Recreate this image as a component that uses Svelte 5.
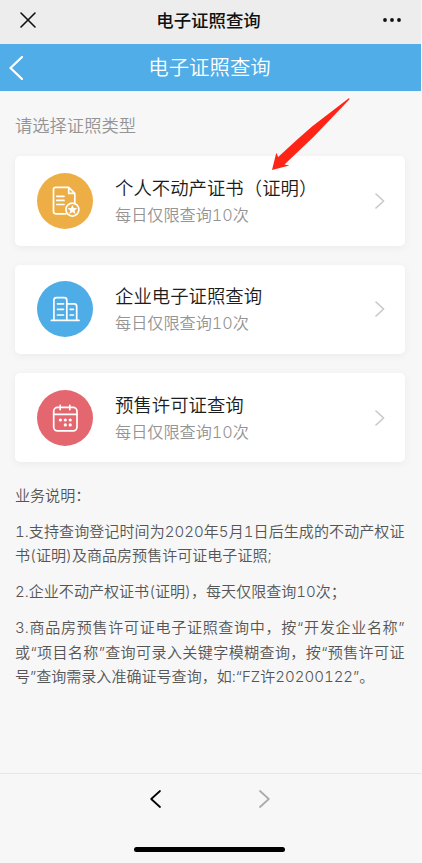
<script lang="ts">
  interface Card {
    icon: 'document' | 'building' | 'calendar';
    title: string;
    hint: string;
  }

  interface Line {
    text: string;
    full?: boolean;
  }

  const cards: Card[] = [
    { icon: 'document', title: '个人不动产证书（证明）', hint: '每日仅限查询10次' },
    { icon: 'building', title: '企业电子证照查询', hint: '每日仅限查询10次' },
    { icon: 'calendar', title: '预售许可证查询', hint: '每日仅限查询10次' },
  ];

  const notes: Line[][] = [
    [{ text: '业务说明：' }],
    [
      { text: '1.支持查询登记时间为2020年5月1日后生成的不动产权证', full: true },
      { text: '书(证明)及商品房预售许可证电子证照;' },
    ],
    [{ text: '2.企业不动产权证书(证明)，每天仅限查询10次；' }],
    [
      { text: '3.商品房预售许可证电子证照查询中，按“开发企业名称”', full: true },
      { text: '或“项目名称”查询可录入关键字模糊查询，按“预售许可证', full: true },
      { text: '号”查询需录入准确证号查询，如:“FZ许20200122”。' },
    ],
  ];
</script>

<div class="screen" lang="zh-CN">
  <header class="topbar">
    <svg class="close" viewBox="0 0 16 16"><path d="M1 1 15 15M15 1 1 15" /></svg>
    <span>电子证照查询</span>
    <svg class="more" viewBox="0 0 18 4">
      <circle cx="2" cy="2" r="1.9" />
      <circle cx="9" cy="2" r="1.9" />
      <circle cx="16" cy="2" r="1.9" />
    </svg>
  </header>

  <div class="navbar">
    <svg class="back" viewBox="0 0 14 24"><path d="M13 1 1.5 12 13 23" /></svg>
    <span>电子证照查询</span>
  </div>

  <main class="content">
    <p class="label">请选择证照类型</p>

    <div class="cards">
      {#each cards as card}
        <div class="card">
          <div class="badge badge--{card.icon}">
            <svg viewBox="0 0 56 56">
              {#if card.icon === 'document'}
                <path d="M28.8 40.8H18.7a2.2 2.2 0 0 1-2.2-2.2V16.6a2.2 2.2 0 0 1 2.2-2.2h13l6.1 6v8.8M31.7 14.4v6h6.1" />
                <path d="M19.8 23.3h7.2M19.8 27.4h7.2M19.8 31.5h7.2" />
                <circle cx="35.4" cy="36.6" r="6.5" />
                <path class="solid" d="m35.4 31.9 1.4 3.1 3.4.3-2.6 2.2.8 3.4-3-1.8-3 1.8.8-3.4-2.6-2.2 3.4-.3z" />
              {:else if card.icon === 'building'}
                <path d="M14.4 39.4H42M16.9 39.4V19.2a2.5 2.5 0 0 1 2.5-2.5h7.9a2.5 2.5 0 0 1 2.5 2.5v20.2M29.8 22.8h7.4a2.5 2.5 0 0 1 2.5 2.5v14.1" />
                <path d="M20.5 22.8h6M20.5 28.3h6M20.5 34h6M33.2 28.3h3.2M33.2 34h3.2" />
              {:else}
                <rect x="16.7" y="17.4" width="23.3" height="23.5" rx="3.8" />
                <path d="M16.7 24.3H40M23.2 15.4v4.2M32.8 15.4v4.2" />
                <g class="dots">
                  <circle cx="23.4" cy="30" r="1.6" />
                  <circle cx="28.3" cy="30" r="1.6" />
                  <circle cx="33.2" cy="30" r="1.6" />
                  <circle cx="28.3" cy="34.9" r="1.6" />
                  <circle cx="33.2" cy="34.9" r="1.6" />
                </g>
              {/if}
            </svg>
          </div>
          <div class="card__text">
            <span class="card__title">{card.title}</span>
            <span class="card__hint">{card.hint}</span>
          </div>
          <svg class="chevron" viewBox="0 0 10 16"><path d="m1 1 7.6 7L1 15" /></svg>
        </div>
      {/each}
      <svg class="pointer" viewBox="0 0 80 75">
        <path d="M76.8.3 77.8 1 41.7 38.7 12.5 66.4 17.3 67.5 0 72 4.3 54.7 6.2 58.9 23.3 43.2 40 28.6z" />
      </svg>
    </div>

    <section class="notes">
      {#each notes as note}
        <p>
          {#each note as line}
            <span class="line" class:line--full={line.full}>{line.text}</span>
          {/each}
        </p>
      {/each}
    </section>
  </main>

  <footer class="toolbar">
    <div class="toolbar__nav">
      <svg viewBox="0 0 11 18"><path d="M10 1 1.2 9l8.8 8" /></svg>
      <svg class="disabled" viewBox="0 0 11 18"><path d="m1 1 8.8 8L1 17" /></svg>
    </div>
    <div class="home"></div>
  </footer>
</div>

<style>
  :global(body) {
    margin: 0;
    background: #f7f7f7;
  }

  .screen {
    display: flex;
    flex-direction: column;
    width: 421px;
    height: 863px;
    overflow: hidden;
    background: #f7f7f7;
    font-family: 'Noto Sans CJK SC', sans-serif;
    font-weight: 350;
  }

  svg {
    display: block;
    flex: none;
    fill: none;
    stroke: currentColor;
    stroke-linecap: round;
    stroke-linejoin: round;
  }

  p {
    margin: 0;
  }

  .topbar {
    display: grid;
    grid-template-columns: 60px 1fr 60px;
    align-items: center;
    flex: none;
    height: 44px;
    padding-bottom: 4px;
    box-sizing: border-box;
    background: #ededed;
    color: #111;
    font-size: 17.4px;
    font-weight: 500;
    line-height: 40px;
    text-align: center;
  }

  .topbar span {
    padding-right: 4px;
  }

  .close {
    width: 16px;
    height: 16px;
    margin-left: 20px;
    stroke-width: 1.6;
  }

  .more {
    width: 18px;
    height: 4px;
    margin-left: 22px;
    fill: currentColor;
    stroke: none;
  }

  .navbar {
    display: grid;
    grid-template-columns: 40px 1fr 40px;
    align-items: center;
    flex: none;
    height: 47px;
    background: #50ade7;
    color: #fff;
    font-size: 20.4px;
    line-height: 45px;
    text-align: center;
  }

  .navbar span {
    height: 47px;
    padding-right: 2px;
  }

  .back {
    width: 14px;
    height: 24px;
    margin-left: 9px;
    stroke-width: 2.3;
  }

  .content {
    flex: 1;
    padding: 20px 16.5px 0 15px;
  }

  .label {
    height: 45.3px;
    color: #949494;
    font-size: 17.3px;
    line-height: 27px;
  }

  .cards {
    position: relative;
    display: flex;
    flex-direction: column;
    gap: 19px;
  }

  .card {
    display: flex;
    align-items: center;
    height: 89.4px;
    padding: 0 20px 0 22px;
    box-sizing: border-box;
    border-radius: 5px;
    background: #fff;
    box-shadow: 0 2px 9px rgba(0, 0, 0, 0.05);
  }

  .badge {
    flex: none;
    width: 56px;
    height: 56px;
    border-radius: 50%;
    color: #fff;
  }

  .badge svg {
    width: 56px;
    height: 56px;
    stroke-width: 1.7;
  }

  .badge--document {
    background: #edae45;
  }

  .badge--building {
    background: #4eade6;
  }

  .badge--calendar {
    background: #e4676f;
  }

  .badge .solid,
  .dots {
    fill: currentColor;
    stroke: none;
  }

  .card__text {
    display: flex;
    flex: 1;
    flex-direction: column;
    padding-left: 22px;
    white-space: nowrap;
  }

  .card__title {
    color: #1c1c1c;
    font-size: 18.4px;
    line-height: 28px;
  }

  .card__hint {
    color: #949494;
    font-family: Inter, 'Noto Sans CJK SC', sans-serif;
    font-size: 16.15px;
    font-variant-numeric: tabular-nums;
    line-height: 28px;
  }

  .chevron {
    width: 10px;
    height: 16px;
    color: #c8c8c8;
    stroke-width: 1.6;
  }

  /* Red arrow lying over the first card */
  .pointer {
    position: absolute;
    top: -58px;
    left: 257px;
    width: 80px;
    height: 75px;
    overflow: visible;
    fill: #ff2516;
    stroke: none;
  }

  .notes {
    display: flex;
    flex-direction: column;
    gap: 12px;
    padding-top: 21.2px;
    color: #555;
    font-family: Inter, 'Noto Sans CJK SC', sans-serif;
    font-size: 15.05px;
    font-variant-numeric: tabular-nums;
    line-height: 24.2px;
  }

  .line {
    display: block;
    white-space: nowrap;
  }

  .line--full {
    text-align: justify;
    text-align-last: justify;
    text-justify: inter-character;
  }

  .toolbar {
    display: flex;
    flex: none;
    flex-direction: column;
    align-items: center;
    justify-content: space-between;
    height: 90px;
    padding: 16px 2px 11px 0;
    box-sizing: border-box;
    border-top: 1px solid #e6e6e6;
  }

  .toolbar__nav {
    display: flex;
    gap: 98px;
    color: #000;
  }

  .toolbar__nav svg {
    width: 11px;
    height: 18px;
    stroke-width: 1.7;
  }

  .toolbar__nav .disabled {
    color: #aaa;
  }

  .home {
    width: 151px;
    height: 5px;
    border-radius: 3px;
    background: #000;
  }
</style>
